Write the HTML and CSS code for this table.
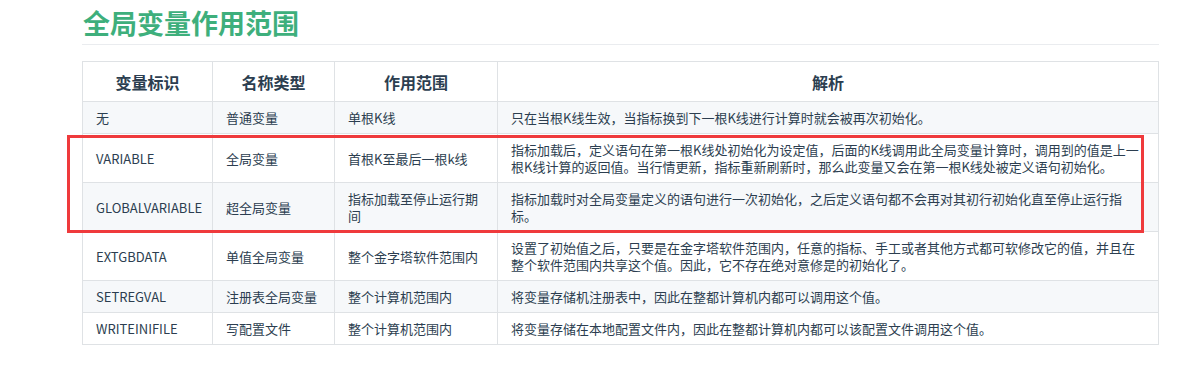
FILE: index.html
```html
<!DOCTYPE html>
<html lang="zh-CN">
<head>
<meta charset="utf-8">
<title>全局变量作用范围</title>
<link rel="stylesheet" href="styles.css">
</head>
<body>
<main class="page">
  <h2 class="title">全局变量作用范围</h2>
  <div class="table-wrap">
    <table class="scope-table">
      <colgroup>
        <col class="c1"><col class="c2"><col class="c3"><col class="c4">
      </colgroup>
      <thead>
        <tr><th>变量标识</th><th>名称类型</th><th>作用范围</th><th>解析</th></tr>
      </thead>
      <tbody>
        <tr><td>无</td><td>普通变量</td><td>单根K线</td><td>只在当根K线生效，当指标换到下一根K线进行计算时就会被再次初始化。</td></tr>
        <tr><td>VARIABLE</td><td>全局变量</td><td>首根K至最后一根k线</td><td>指标加载后，定义语句在第一根K线处初始化为设定值，后面的K线调用此全局变量计算时，调用到的值是上一根K线计算的返回值。当行情更新，指标重新刷新时，那么此变量又会在第一根K线处被定义语句初始化。</td></tr>
        <tr><td>GLOBALVARIABLE</td><td>超全局变量</td><td>指标加载至停止运行期间</td><td>指标加载时对全局变量定义的语句进行一次初始化，之后定义语句都不会再对其初行初始化直至停止运行指标。</td></tr>
        <tr><td>EXTGBDATA</td><td>单值全局变量</td><td>整个金字塔软件范围内</td><td>设置了初始值之后，只要是在金字塔软件范围内，任意的指标、手工或者其他方式都可软修改它的值，并且在整个软件范围内共享这个值。因此，它不存在绝对意修是的初始化了。</td></tr>
        <tr><td>SETREGVAL</td><td>注册表全局变量</td><td>整个计算机范围内</td><td>将变量存储机注册表中，因此在整都计算机内都可以调用这个值。</td></tr>
        <tr><td>WRITEINIFILE</td><td>写配置文件</td><td>整个计算机范围内</td><td>将变量存储在本地配置文件内，因此在整都计算机内都可以该配置文件调用这个值。</td></tr>
      </tbody>
    </table>
    <div class="highlight-box"></div>
  </div>
</main>
</body>
</html>
```

FILE: styles.css
```css
html, body {
  margin: 0;
  padding: 0;
  background: #ffffff;
}

body {
  font-family: "Noto Sans CJK SC", "Open Sans", sans-serif;
  color: #2c3e50;
}

.page {
  width: 1077px;
  margin-left: 82px;
}

.title {
  margin: 0;
  padding: 7px 0 5px 1px;
  font-size: 27px;
  line-height: 32px;
  font-weight: 700;
  color: #3eaf7c;
  border-bottom: 1px solid #eaecef;
}

.table-wrap {
  position: relative;
  margin-top: 16px;
}

.scope-table {
  width: 1077px;
  table-layout: fixed;
  border-collapse: collapse;
}

.c1 { width: 130px; }
.c2 { width: 122px; }
.c3 { width: 163px; }
.c4 { width: auto; }

.scope-table th,
.scope-table td {
  border: 1px solid #dfe2e5;
  text-align: left;
  vertical-align: middle;
}

.scope-table th {
  font-size: 16px;
  line-height: 20px;
  font-weight: 700;
  padding: 10px 13px 9px;
  text-align: center;
  color: #2c3e50;
}

.scope-table td {
  font-size: 13px;
  line-height: 17px;
  padding: 7px 13px;
}

.scope-table tbody tr.short td {
  padding: 6px 13px;
}

.scope-table tbody tr:nth-child(odd) {
  background: #f6f8fa;
}

.highlight-box {
  position: absolute;
  left: -15px;
  top: 74px;
  width: 1077px;
  height: 98px;
  box-sizing: border-box;
  border: 3px solid #ef3a3c;
  pointer-events: none;
}
```
